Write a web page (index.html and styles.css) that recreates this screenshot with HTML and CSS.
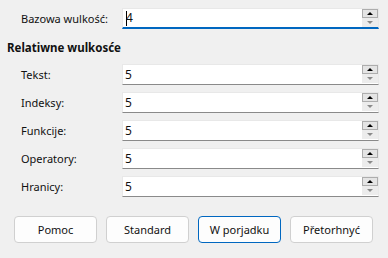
FILE: index.html
```html
<!DOCTYPE html>
<html lang="pl">
<head>
<meta charset="utf-8">
<link rel="stylesheet" href="styles.css">
</head>
<body>
<div class="dialog">
  <div class="row first">
    <span class="label">Bazowa wulkość:</span>
    <div class="field focused">
      <span class="value"><span class="caret"></span>4</span>
      <div class="spin"><span class="up"></span><span class="down"></span></div>
    </div>
  </div>
  <div class="heading">Relatiwne wulkosće</div>
  <div class="group">
    <div class="row">
      <span class="label">Tekst:</span>
      <div class="field"><span class="value">5</span><div class="spin"><span class="up"></span><span class="down"></span></div></div>
    </div>
    <div class="row">
      <span class="label">Indeksy:</span>
      <div class="field"><span class="value">5</span><div class="spin"><span class="up"></span><span class="down"></span></div></div>
    </div>
    <div class="row">
      <span class="label">Funkcije:</span>
      <div class="field"><span class="value">5</span><div class="spin"><span class="up"></span><span class="down"></span></div></div>
    </div>
    <div class="row">
      <span class="label">Operatory:</span>
      <div class="field"><span class="value">5</span><div class="spin"><span class="up"></span><span class="down"></span></div></div>
    </div>
    <div class="row">
      <span class="label">Hranicy:</span>
      <div class="field"><span class="value">5</span><div class="spin"><span class="up"></span><span class="down"></span></div></div>
    </div>
  </div>
  <div class="buttons">
    <button class="btn">Pomoc</button>
    <button class="btn">Standard</button>
    <button class="btn default">W porjadku</button>
    <button class="btn">Přetorhnyć</button>
  </div>
</div>
</body>
</html>
```
FILE: styles.css
```css
html, body {
  margin: 0;
  padding: 0;
  background: #f0f0f0;
}
.dialog {
  width: 388px;
  height: 258px;
  box-sizing: border-box;
  padding-top: 8px;
  font-family: "Noto Sans", "Liberation Sans", sans-serif;
  font-size: 11px;
  color: #111;
  display: flex;
  flex-direction: column;
}
.row {
  display: grid;
  grid-template-columns: 101px 257px;
  padding-left: 21px;
  height: 21px;
  align-items: center;
}
.group {
  display: flex;
  flex-direction: column;
  gap: 7px;
}
.heading {
  font-weight: bold;
  font-size: 11.5px;
  padding-left: 7px;
  height: 14px;
  line-height: 14px;
  margin-top: 12px;
  margin-bottom: 9px;
}
.field {
  height: 21px;
  box-sizing: border-box;
  background: #fff;
  border: 1px solid #e8e8e8;
  border-bottom: 1px solid #8a8a8a;
  display: flex;
  align-items: center;
  justify-content: space-between;
}
.field.focused {
  border-bottom: 2px solid #0067c0;
}
.value {
  padding-left: 2px;
  display: flex;
  align-items: center;
  line-height: 14px;
  font-size: 12px;
}
.caret {
  display: inline-block;
  width: 1px;
  height: 15px;
  background: #000;
  margin-right: -1px;
  margin-left: 1px;
}
.spin {
  display: flex;
  flex-direction: column;
  width: 16px;
  align-self: flex-start;
}
.spin span {
  height: 9px;
  box-sizing: border-box;
  background: #ececec;
  display: flex;
  align-items: center;
  justify-content: center;
}
.spin span::after {
  content: "";
  width: 0;
  height: 0;
  border-left: 3px solid transparent;
  border-right: 3px solid transparent;
}
.spin .up {
  background: #e4e4e4;
  border: 1px solid #adadad;
}
.spin .up::after {
  border-bottom: 3px solid #000;
}
.spin .down::after {
  border-top: 3px solid #8a8a8a;
}
.buttons {
  margin-top: auto;
  margin-bottom: 15px;
  display: flex;
  gap: 9px;
  padding-left: 14px;
}
.btn {
  width: 83px;
  height: 27px;
  box-sizing: border-box;
  background: #fdfdfd;
  border: 1px solid #d0d0d0;
  border-radius: 4px;
  font-family: "Noto Sans", "Liberation Sans", sans-serif;
  font-size: 11px;
  color: #111;
  padding: 0;
}
.btn.default {
  border-color: #0067c0;
}
```
